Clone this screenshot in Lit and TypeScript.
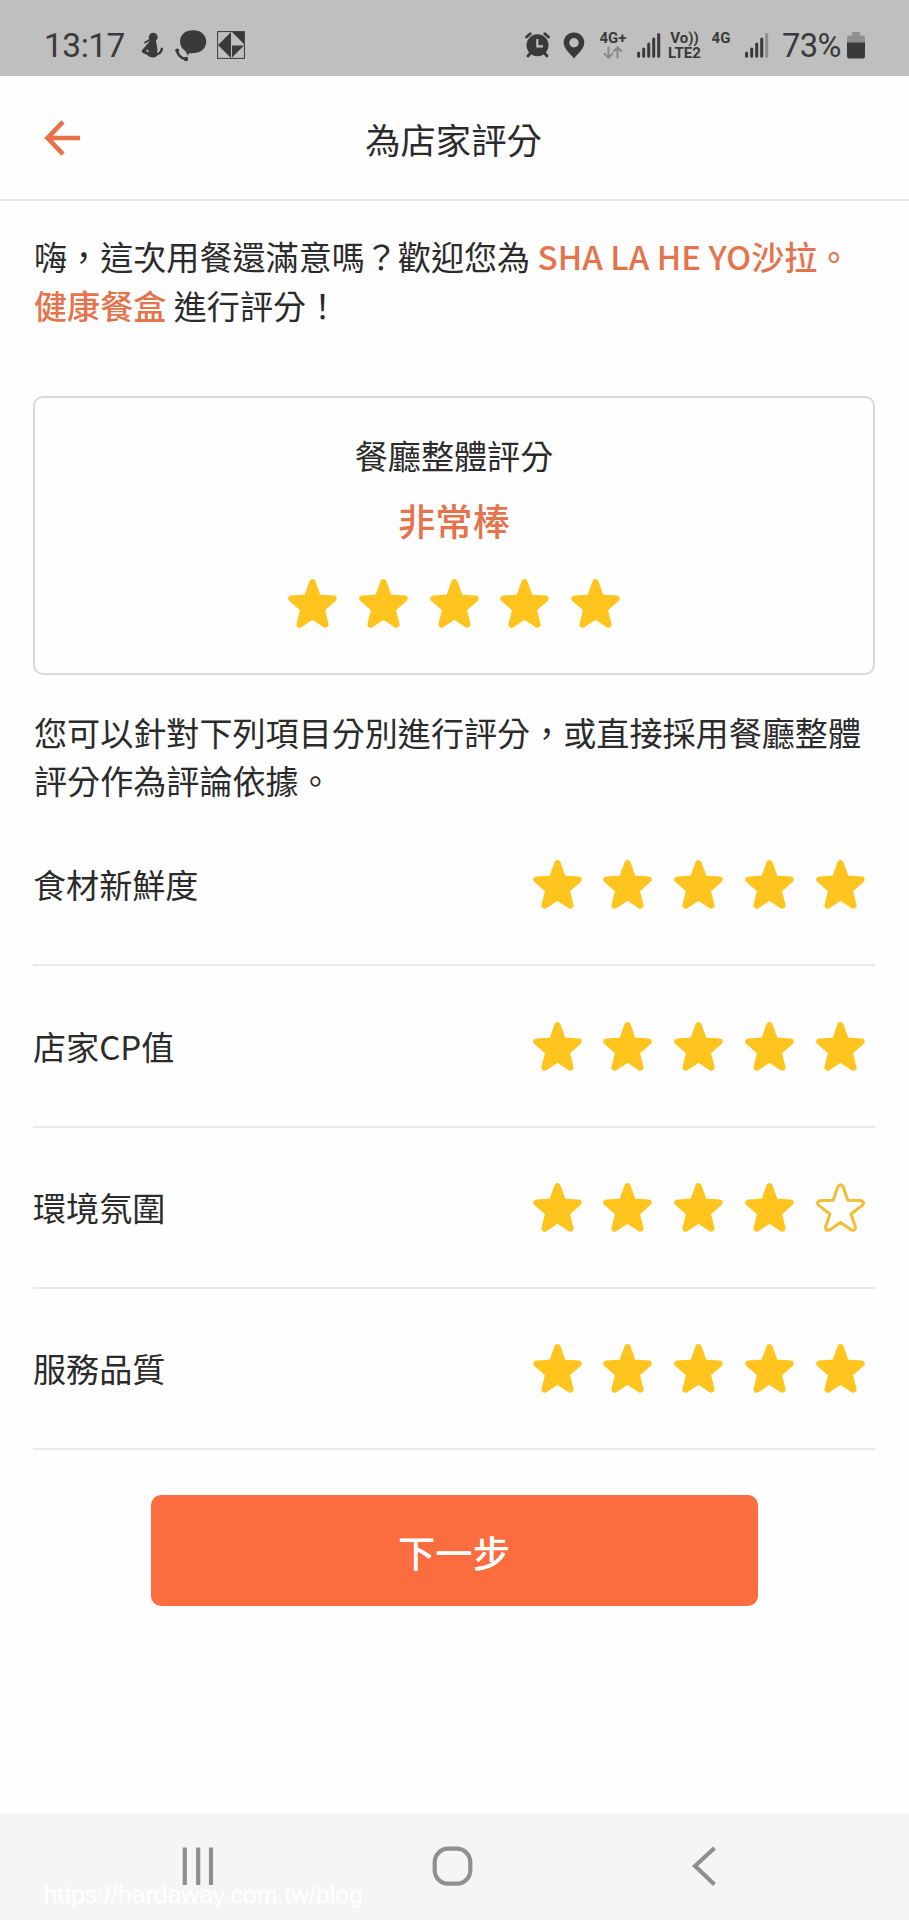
import { LitElement, html, css, svg } from "lit";
import { customElement, property } from "lit/decorators.js";

const STAR =
  "M24.5 3.3 L30 18.8 L45.5 19.6 L33.5 30 L37.4 45.5 L24.5 37 L11.6 45.5 L15.5 30 L3.5 19.6 L19 18.8 Z";
const STAR_OUTLINE =
  "M21.7 4 Q24.5 -0.6 27.3 4 L31.8 17.3 L44.6 17.5 Q49.6 18.8 46 22.6 L35 31 L39.4 43.8 Q39.4 48.8 34.800 46.7 L24.5 39.4 L14.200 46.7 Q9.600 48.8 9.600 43.8 L14 31 L3 22.600 Q-0.6 18.8 4.4 17.5 L17.2 17.3 Z";

@customElement("star-rating")
class StarRating extends LitElement {
  @property({ type: Number }) value = 5;

  static styles = css`
    :host {
      display: flex;
      gap: 21.7px;
    }
    .star {
      display: block;
      width: 49px;
      height: 49px;
      flex: none;
      stroke: #ffc41d;
      stroke-width: 6.4;
      stroke-linejoin: round;
      fill: #ffc41d;
    }
    .rim {
      stroke: #f3bd36;
      stroke-width: 3;
      fill: none;
    }
  `;

  render() {
    return [1, 2, 3, 4, 5].map((n) =>
      n <= this.value
        ? html`<svg class="star" viewBox="0 0 49 49"><path d=${STAR} /></svg>`
        : html`<svg class="star rim" viewBox="0 0 49 49"><path d=${STAR_OUTLINE} /></svg>`
    );
  }
}

const bars = (last: string) => svg`
  <g stroke-width="3" stroke-linecap="round" stroke="#3a3a3a">
    <path d="M1.6 20V23.2M6.7 16V23.2M11.7 11V23.2M16.7 6V23.2" />
    <path stroke=${last} d="M21.7 1.6V23.2" />
  </g>`;

@customElement("status-bar")
class StatusBar extends LitElement {
  static styles = css`
    :host {
      display: flex;
      align-items: center;
      box-sizing: border-box;
      height: 76px;
      padding: 14px 44px 0 44px;
      background: #bfbfbf;
      color: #3a3a3a;
      font-family: Roboto, sans-serif;
    }
    svg {
      display: block;
      flex: none;
    }
    .time {
      width: 96px;
      padding-top: 2px;
      font-size: 33.5px;
      line-height: 40px;
      letter-spacing: -0.5px;
      white-space: nowrap;
    }
    .person { margin-left: 1px; }
    .chat { margin-left: 12px; }
    .tile { margin-left: 10px; }
    .alarm { margin-left: auto; }
    .pin { margin-left: 13px; }
    .net {
      display: flex;
      flex-direction: column;
      align-items: center;
      width: 30px;
      height: 29px;
      margin-left: 13px;
      padding-top: 1px;
      font-size: 15px;
      font-weight: 700;
      line-height: 15px;
    }
    .second { width: 22px; margin-left: 8px; }
    .signal { margin-left: 9px; }
    .signal2 { margin-left: 13px; }
    .volte {
      display: flex;
      flex-direction: column;
      align-items: center;
      width: 35px;
      margin-left: 6px;
      padding-top: 2px;
      font-size: 15px;
      font-weight: 700;
      line-height: 15px;
      white-space: nowrap;
    }
    .pct {
      margin-left: 13px;
      padding-top: 2px;
      width: 62px;
      font-size: 32.7px;
      line-height: 40px;
      letter-spacing: -0.6px;
      white-space: nowrap;
    }
    .battery { margin-left: 3px; }
  `;

  render() {
    return html`
      <span class="time">13:17</span>
      <svg class="person" width="22" height="27" viewBox="0 0 22 27" fill="#3a3a3a">
        <circle cx="12.2" cy="5.2" r="4.4" />
        <path d="M2.6 10.6 9 6.4 9.6 8.4 4 11.6Z" />
        <path fill-rule="evenodd" d="M9 9 15 9 16.5 17.5 16 21Q19.5 20 19.8 15.5L22 16C21.8 21 19 22.8 16.5 23.2 15 26 8.5 26.2 7 23.5L1.2 20.5C0 19 1 17.8 2 17ZM7.2 17 5 19 7.4 20.6Z" />
      </svg>
      <svg class="chat" width="32" height="33" viewBox="0 0 32 33" fill="#3a3a3a">
        <path d="M18 1.2C26 1.2 31.2 6 31.2 12.6 31.2 19 26.5 24 19 24L13.5 24.4 13 27 10.5 22.2C7 20 5 16.5 5 12.6 5 6 10 1.2 18 1.2Z" />
        <path fill="none" stroke="#3a3a3a" stroke-width="2.6" stroke-linecap="round" d="M2 21.5C2.6 25.5 6 29.5 11.2 30.4" />
        <circle cx="2.2" cy="21.6" r="2" /><circle cx="11" cy="30" r="2.2" />
      </svg>
      <svg class="tile" width="28" height="28" viewBox="0 0 28 28" fill="#3a3a3a">
        <rect x=".6" y=".6" width="26.8" height="26.8" fill="none" stroke="#3a3a3a" />
        <path d="M14 1V27L1 14ZM15 1H27V13ZM15 14.5H27L15 26.5Z" />
      </svg>
      <svg class="alarm" width="25" height="26" viewBox="0 0 25 26">
        <g fill="none" stroke="#3a3a3a" stroke-width="2.8" stroke-linecap="round">
          <path d="M1.5 5 5.2 1.7M23.5 5 19.8 1.7M5.5 21 3 24M19.5 21 22 24" />
        </g>
        <circle cx="12.5" cy="13.3" r="11" fill="#3a3a3a" />
        <path d="M12.3 7V14.3H18" fill="none" stroke="#bfbfbf" stroke-width="2.2" />
      </svg>
      <svg class="pin" width="22" height="27" viewBox="0 0 22 27">
        <path fill="#3a3a3a" fill-rule="evenodd" d="M11 .5C5 .5 .7 5 .7 10.6 .7 17 7 21.5 11 26.5 15 21.5 21.3 17 21.3 10.6 21.3 5 17 .5 11 .5ZM11 6A4.7 4.7 0 1 1 11 15.4 4.7 4.7 0 0 1 11 6Z" />
      </svg>
      <span class="net">4G+
        <svg width="20" height="13" viewBox="0 0 20 13" fill="none" stroke="#898989" stroke-width="2">
          <path d="M5.5 .5V11.5M1 7.2 5.5 11.7 10 7.2M14.5 12.5V1.5M10.5 5.8 14.5 1.5 19 5.8" />
        </svg>
      </span>
      <svg class="signal" width="24" height="25" viewBox="0 0 24 25">${bars("#3a3a3a")}</svg>
      <span class="volte"><span>Vo))</span><span>LTE2</span></span>
      <span class="net second">4G</span>
      <svg class="signal2" width="24" height="25" viewBox="0 0 24 25">${bars("#8f8f8f")}</svg>
      <span class="pct">73%</span>
      <svg class="battery" width="18" height="28" viewBox="0 0 18 28">
        <path fill="#8f8f8f" d="M5 1H13V4.5H16Q18 4.5 18 6.5V12H0V6.5Q0 4.5 2 4.5H5Z" />
        <path fill="#3a3a3a" d="M0 11.5H18V25Q18 27.5 15.5 27.5H2.5Q0 27.5 0 25Z" />
      </svg>
    `;
  }
}

@customElement("app-root")
class AppRoot extends LitElement {
  static styles = css`
    :host {
      display: flex;
      flex-direction: column;
      width: 909px;
      height: 1920px;
      background: #fefefe;
      color: #2b2b2b;
      font-family: "Noto Sans CJK TC", sans-serif;
      font-size: 33.1px;
      overflow: hidden;
    }
    .header {
      display: grid;
      grid-template-columns: 80px 1fr 82px;
      align-items: center;
      box-sizing: border-box;
      height: 125px;
      border-bottom: 2px solid #e6e6e6;
    }
    .back { display: block; margin: 0 0 0 44px; }
    .title {
      margin: 0;
      padding-top: 2px;
      text-align: center;
      font-size: 35.3px;
      font-weight: 400;
      line-height: 52px;
    }
    .main {
      display: flex;
      flex-direction: column;
      padding: 0 34px 0 33px;
    }
    .text {
      margin: 0;
      line-height: 48.5px;
      padding-left: 1px;
      white-space: nowrap;
    }
    .intro { margin-top: 31px; }
    .shop { color: #e5734c; font-weight: 500; }
    .card {
      display: flex;
      flex-direction: column;
      align-items: center;
      box-sizing: border-box;
      height: 279px;
      margin-top: 67px;
      border: 2px solid #d9d9d9;
      border-radius: 10px;
      padding-top: 33px;
    }
    .card-title { line-height: 48px; }
    .verdict {
      margin-top: 13px;
      color: #e5734c;
      font-size: 37.3px;
      font-weight: 500;
      line-height: 56px;
    }
    .card-stars { margin-top: 31px; }
    .desc { margin-top: 33px; line-height: 48px; }
    .rows { margin-top: 1px; }
    .row {
      display: flex;
      align-items: center;
      justify-content: space-between;
      box-sizing: border-box;
      height: 161.35px;
      padding: 0 10.5px 0 0;
      border-bottom: 2px solid #e9e9e9;
    }
    .row span { margin-top: -1px; }
    .next {
      align-self: center;
      width: 607px;
      height: 111px;
      margin-top: 45px;
      padding: 2px 0 0;
      border: 0;
      border-radius: 10px;
      background: #fb6d3e;
      color: #fff;
      font-family: inherit;
      font-size: 37.3px;
      font-weight: 500;
    }
    .nav {
      position: relative;
      height: 106px;
      margin-top: auto;
      background: #f5f5f5;
    }
    .nav-icons { display: block; }
    .mark {
      position: absolute;
      left: 43.5px;
      top: 67px;
      color: #fff;
      font: 24.8px/27px "Liberation Sans", sans-serif;
    }
  `;

  private items = [
    { label: "食材新鮮度", value: 5 },
    { label: "店家CP值", value: 5 },
    { label: "環境氛圍", value: 4 },
    { label: "服務品質", value: 5 },
  ];

  render() {
    return html`
      <status-bar></status-bar>
      <header class="header">
        <svg class="back" width="36" height="36" viewBox="0 0 36 36" fill="none" stroke="#e9714a" stroke-width="4.6">
          <path d="M19 1.8 3.5 18 19 34.2M3 18H36" />
        </svg>
        <h1 class="title">為店家評分</h1>
      </header>
      <main class="main">
        <p class="text intro">嗨，這次用餐還滿意嗎？歡迎您為 <span class="shop">SHA LA HE YO沙拉。<br />健康餐盒</span> 進行評分！</p>
        <section class="card">
          <div class="card-title">餐廳整體評分</div>
          <div class="verdict">非常棒</div>
          <star-rating class="card-stars" .value=${5}></star-rating>
        </section>
        <p class="text desc">您可以針對下列項目分別進行評分，或直接採用餐廳整體<br />評分作為評論依據。</p>
        <div class="rows">
          ${this.items.map(
            (i) => html`<div class="row"><span>${i.label}</span><star-rating .value=${i.value}></star-rating></div>`
          )}
        </div>
        <button class="next">下一步</button>
      </main>
      <nav class="nav">
        <svg class="nav-icons" width="909" height="106" viewBox="0 0 909 106" fill="none" stroke="#8f8f8f" stroke-width="4.2">
          <path d="M184.8 33.5V71M198.2 33.5V71M211 33.5V71" />
          <rect x="434.7" y="34.7" width="35.6" height="35" rx="13.5" />
          <path d="M714.5 34 695 52 714.5 70.5" />
        </svg>
        <div class="mark">https://hardaway.com.tw/blog</div>
      </nav>
    `;
  }
}
